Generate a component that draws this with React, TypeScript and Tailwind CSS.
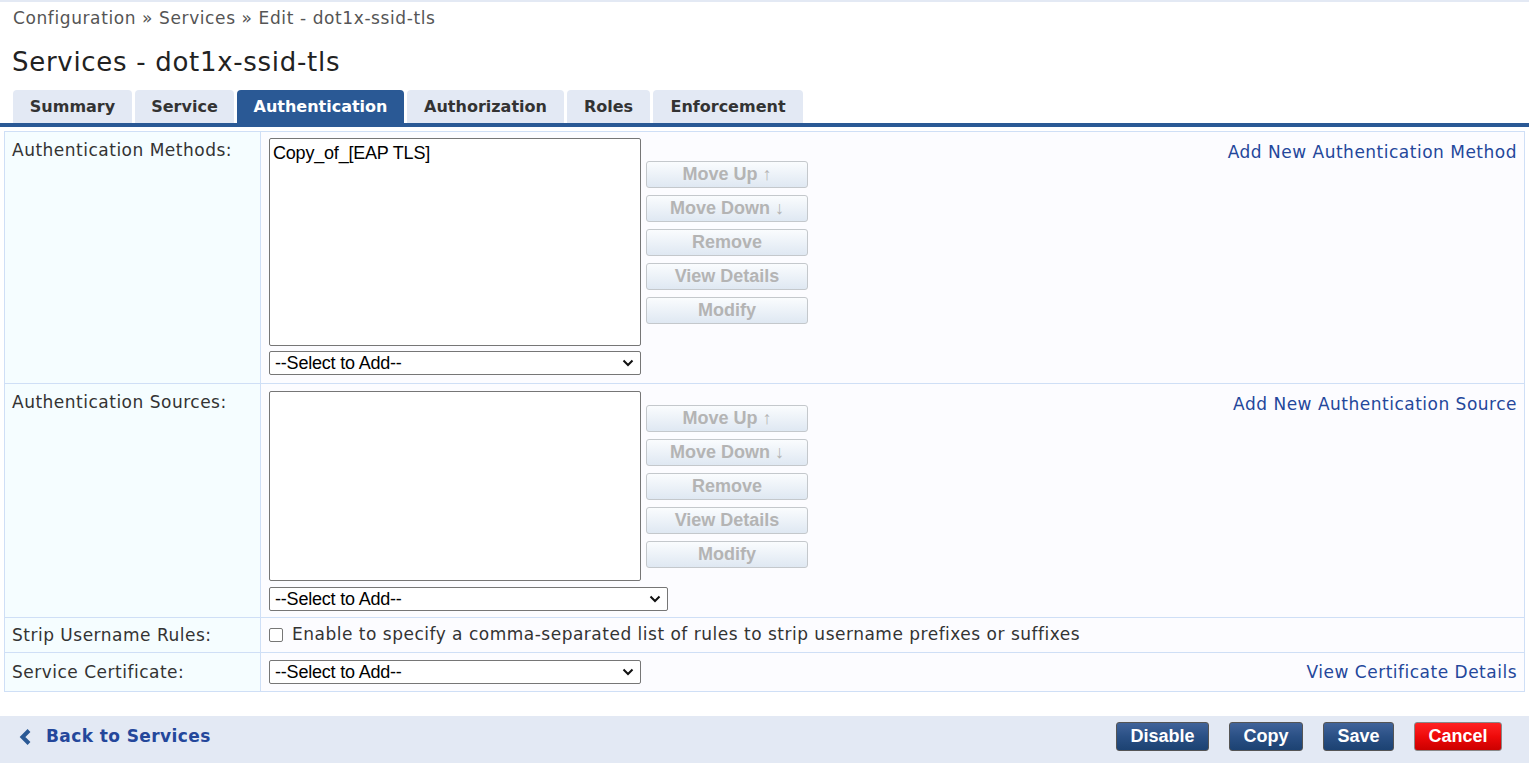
import React from 'react'

const tabs = [
  { name: 'Summary', w: 'w-[119px]' },
  { name: 'Service', w: 'w-[99px]' },
  { name: 'Authentication', w: 'w-[167px]', active: true },
  { name: 'Authorization', w: 'w-[157px]' },
  { name: 'Roles', w: 'w-[83px]' },
  { name: 'Enforcement', w: 'w-[150px]' },
]

const sideButtons = ['Move Up ↑', 'Move Down ↓', 'Remove', 'View Details', 'Modify']

function SideButtons() {
  return (
    <div className="flex flex-col gap-[7px] ml-[5px]">
      {sideButtons.map(b => (
        <button
          key={b}
          disabled
          className="w-[162px] h-[27px] rounded-[3px] border border-[#c4c8cc] bg-gradient-to-b from-[#fafcfe] to-[#dfe8f2] text-[#b4b4b4] font-bold text-[18px] leading-none [font-family:'Liberation_Sans',Arial,sans-serif]"
        >
          {b}
        </button>
      ))}
    </div>
  )
}

function Select({ w }: { w: string }) {
  return (
    <div className={`${w} h-[24px] border border-[#767676] rounded-[2px] bg-white flex items-center justify-between pl-[5px] pr-[6px] text-[18px] tracking-[-0.2px] text-black [font-family:'Liberation_Sans',Arial,sans-serif]`}>
      <span>--Select to Add--</span>
      <svg width="12" height="8" viewBox="0 0 12 8" fill="none">
        <path d="M1.5 1.5 L6 6 L10.5 1.5" stroke="#111" strokeWidth="2" />
      </svg>
    </div>
  )
}

function Label({ children, className = '' }: { children: React.ReactNode; className?: string }) {
  return (
    <div className={`bg-[#f5fdff] border-r border-[#cfdff6] pl-[7px] text-[17px] tracking-[0.5px] leading-[20px] text-[#333] ${className}`}>
      {children}
    </div>
  )
}

const link = 'text-[17px] leading-[20px] text-[#24479b] tracking-[0.5px]'

export default function App() {
  return (
    <div className="w-[1529px] h-[763px] bg-white flex flex-col [font-family:'DejaVu_Sans',Verdana,sans-serif] overflow-hidden">
      <div className="h-[2px] bg-[#e3e9f4]" />
      <div className="pl-[13px] pt-[6px] text-[17px] tracking-[0.6px] text-[#555] leading-[20px]">
        Configuration » Services » Edit - dot1x-ssid-tls
      </div>
      <h1 className="pl-[12px] pt-[19px] text-[26px] tracking-[0.7px] text-[#222] leading-[30px]">Services - dot1x-ssid-tls</h1>

      {/* tabs */}
      <div className="flex gap-[3px] pl-[13px] mt-[13px] items-end">
        {tabs.map(t => (
          <div
            key={t.name}
            className={`${t.w} h-[33px] rounded-t-[4px] flex items-center justify-center font-bold text-[16px] ${t.active ? 'bg-[#2a5995] text-white' : 'bg-[#e3e9f4] text-[#333]'}`}
          >
            {t.name}
          </div>
        ))}
      </div>
      <div className="h-[4px] bg-[#2a5995]" />

      {/* form table */}
      <div className="mx-[4px] mt-[4px] border border-[#cfdff6] bg-[#fcfcff] grid grid-cols-[256px_1fr]">
        {/* methods */}
        <Label className="pt-[8px] h-[251px]">Authentication Methods:</Label>
        <div className="flex justify-between pl-[8px] pr-[7px] pt-[6px]">
          <div className="flex flex-col gap-[5px]">
            <div className="flex items-center">
              <div className="w-[372px] h-[208px] border border-[#767676] rounded-[2px] bg-white px-[3px] pt-[1px] text-[18px] tracking-[-0.2px] text-black [font-family:'Liberation_Sans',Arial,sans-serif]">
                Copy_of_[EAP TLS]
              </div>
              <SideButtons />
            </div>
            <Select w="w-[372px]" />
          </div>
          <div className={`${link} pt-[4px]`}>Add New Authentication Method</div>
        </div>

        {/* sources */}
        <Label className="pt-[8px] h-[234px] border-t">Authentication Sources:</Label>
        <div className="flex justify-between pl-[8px] pr-[7px] pt-[7px] border-t border-[#cfdff6]">
          <div className="flex flex-col gap-[6px]">
            <div className="flex items-center">
              <div className="w-[372px] h-[190px] border border-[#767676] rounded-[2px] bg-white" />
              <SideButtons />
            </div>
            <Select w="w-[399px]" />
          </div>
          <div className={`${link} pt-[3px]`}>Add New Authentication Source</div>
        </div>

        {/* strip */}
        <Label className="h-[35px] border-t flex items-center">Strip Username Rules:</Label>
        <div className="flex items-center pl-[8px] border-t border-[#cfdff6] text-[17px] tracking-[0.5px] text-[#333]">
          <span className="w-[14px] h-[14px] border border-[#767676] rounded-[2px] bg-white mr-[9px]" />
          Enable to specify a comma-separated list of rules to strip username prefixes or suffixes
        </div>

        {/* certificate */}
        <Label className="h-[39px] border-t flex items-center">Service Certificate:</Label>
        <div className="flex items-center justify-between pl-[8px] pr-[7px] border-t border-[#cfdff6]">
          <Select w="w-[372px]" />
          <div className={link}>View Certificate Details</div>
        </div>
      </div>

      {/* footer */}
      <div className="mt-auto h-[47px] bg-[#e3e9f4] flex items-center justify-between pl-[19px] pr-[27px] pb-[6px]">
        <div className="flex items-center gap-[14px] text-[#24479b] font-bold text-[17px] tracking-[0.4px]">
          <svg width="13" height="16" viewBox="0 0 13 16">
            <path d="M10 1.5 L3.5 8 L10 14.5" stroke="#2a5995" strokeWidth="4" fill="none" />
          </svg>
          Back to Services
        </div>
        <div className="flex gap-[20px] [font-family:'Liberation_Sans',Arial,sans-serif]">
          {[
            { t: 'Disable', w: 'w-[93px]' },
            { t: 'Copy', w: 'w-[74px]' },
            { t: 'Save', w: 'w-[71px]' },
          ].map(b => (
            <button
              key={b.t}
              className={`${b.w} h-[29px] rounded-[3px] border border-[#555] bg-gradient-to-b from-[#41649a] via-[#2a5085] to-[#1c4272] text-white font-bold text-[18px]`}
            >
              {b.t}
            </button>
          ))}
          <button className="w-[88px] h-[29px] rounded-[3px] border border-[#888] bg-gradient-to-b from-[#ff2020] via-[#ee0a0a] to-[#cc0000] text-white font-bold text-[18px]">
            Cancel
          </button>
        </div>
      </div>
    </div>
  )
}
